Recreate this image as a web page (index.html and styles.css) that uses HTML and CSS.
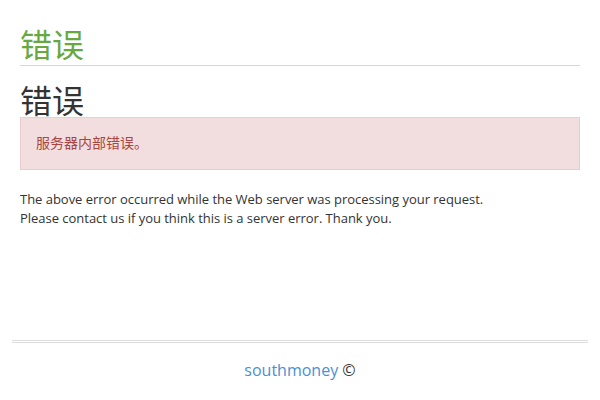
FILE: index.html
```html
<!DOCTYPE html>
<html lang="zh-CN">
<head>
<meta charset="utf-8">
<title>错误</title>
<link rel="stylesheet" href="styles.css">
</head>
<body>
<div class="page">
  <div class="header">
    <h1 class="brand">错误</h1>
  </div>
  <div class="content">
    <h1 class="title">错误</h1>
    <div class="alert">服务器内部错误。</div>
    <p class="note">The above error occurred while the Web server was processing your request.<br>Please contact us if you think this is a server error. Thank you.</p>
  </div>
</div>
<div class="footer">
  <hr class="rule">
  <p class="copy"><a href="#" class="link">southmoney</a> ©</p>
</div>
</body>
</html>
```

FILE: styles.css
```css
html, body {
  margin: 0;
  padding: 0;
  background: #fff;
}
body {
  font-family: "Open Sans", "Noto Sans CJK SC", sans-serif;
  color: #333;
  font-size: 13px;
}
.page {
  padding: 0 20px;
  height: 340px;
  box-sizing: border-box;
}
.header {
  padding-top: 27px;
  padding-bottom: 6px;
  border-bottom: 1px solid #d3dccb;
}
.brand {
  margin: 0;
  font-family: "Noto Sans CJK SC", sans-serif;
  font-weight: 400;
  font-size: 32px;
  line-height: 32px;
  color: #68a840;
}
.content {
  padding-top: 16px;
}
.title {
  margin: 0;
  font-family: "Noto Sans CJK SC", sans-serif;
  font-weight: 400;
  font-size: 32px;
  line-height: 35px;
  color: #333;
}
.alert {
  background: #f2dede;
  border: 1px solid #ebccd1;
  color: #a94442;
  padding: 14px 15px 16px;
  font-family: "Noto Sans CJK SC", sans-serif;
  font-size: 14px;
  line-height: 21px;
}
.note {
  margin: 20px 0 0;
  line-height: 19px;
  letter-spacing: -0.025px;
}
.footer {
  padding: 0 12px;
}
.rule {
  margin: 0;
  border: 0;
  border-top: 3px double #ddd;
}
.copy {
  margin: 0;
  padding-top: 16px;
  text-align: center;
  font-size: 16px;
  line-height: 22px;
}
.link {
  color: #4a90d2;
  text-decoration: none;
}
```
